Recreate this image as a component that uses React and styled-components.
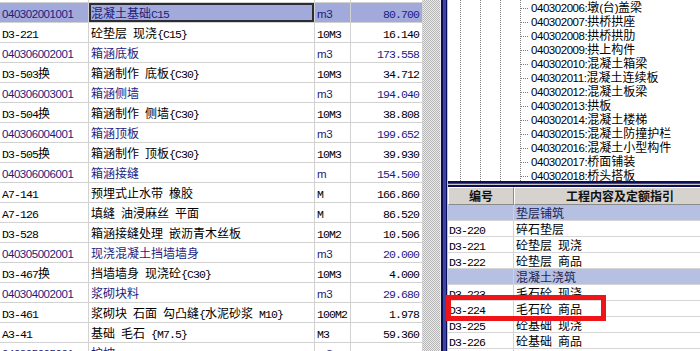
import React from "react";
import styled, { createGlobalStyle } from "styled-components";

const GlobalStyle = createGlobalStyle`
  html, body {
    margin: 0;
    padding: 0;
    background: #fff;
    overflow: hidden;
  }
  body {
    font-family: "Noto Sans CJK SC", sans-serif;
    font-size: 12px;
    color: #000;
  }
`;

const NAVY = "#1c1c80";

const Screen = styled.div`
  position: relative;
  display: flex;
  width: 700px;
  height: 351px;
  overflow: hidden;
`;

/* ---------- left bill grid ---------- */
const LeftGrid = styled.div`
  flex: none;
  width: 423px;
  height: 351px;
  overflow: hidden;
`;

const GridBody = styled.div`
  margin-top: -17px;
`;

const Row = styled.div`
  display: grid;
  grid-template-columns: 89px 226px 36px 72px;
  height: 20px;
  box-sizing: border-box;
  border-bottom: 1px solid #d2d2d2;
  background: ${(p) => (p.$sel ? "#a2aadb" : "#fff")};
  color: ${(p) => (p.$bill ? NAVY : "#000")};
`;

const Cell = styled.div`
  box-sizing: border-box;
  border-right: 1px solid #d2d2d2;
  padding: 0 ${(p) => (p.$right ? "3px" : "2px")};
  line-height: 20px;
  white-space: nowrap;
  overflow: hidden;
  text-align: ${(p) => (p.$right ? "right" : "left")};
  box-shadow: ${(p) => (p.$focus ? "inset 0 0 0 2px #2c2c34" : "none")};
`;

const Lat = styled.span`
  font-family: ${(p) =>
    p.$kind === "sans"
      ? '"Liberation Sans", Arial, sans-serif'
      : '"Liberation Mono", "DejaVu Sans Mono", monospace'};
  font-size: 11.5px;
  letter-spacing: ${(p) => (p.$kind === "sans" ? "-0.45px" : "-0.9px")};
  white-space: pre;
  line-height: inherit;
`;

const Han = styled.span`
  font-family: "Noto Sans CJK SC", sans-serif;
  font-size: 12px;
  line-height: inherit;
`;

function Mixed({ text, kind = "mono" }) {
  return text
    .split(/([\x20-\x7e]+)/)
    .filter(Boolean)
    .map((part, i) =>
      /^[\x20-\x7e]+$/.test(part) ? (
        <Lat key={i} $kind={kind}>
          {part}
        </Lat>
      ) : (
        <Han key={i}>{part}</Han>
      )
    );
}

/* ---------- hatch + splitter ---------- */
const Hatch = styled.div`
  flex: none;
  width: 17px;
  background: repeating-conic-gradient(#b4b4b4 0 25%, #ececec 0 50%) 0 0 / 2px 2px;
`;

const Splitter = styled.div`
  flex: none;
  width: 8px;
  background: linear-gradient(
    to right,
    #e6e6e6 0 1px,
    #0e0e58 1px 3px,
    #3a46a4 3px 6px,
    #0e0e58 6px 7px,
    #c4c4c4 7px 8px
  );
`;

/* ---------- right side ---------- */
const RightPane = styled.div`
  flex: 1;
  min-width: 0;
  display: flex;
  flex-direction: column;
  overflow: hidden;
`;

const Tree = styled.div`
  flex: none;
  height: 181px;
  overflow: hidden;
  background: #fff;
`;

const TreeRow = styled.div`
  height: 14px;
  line-height: 14px;
  padding-left: 73px;
  white-space: nowrap;
  background-image: linear-gradient(#7c7c7c 50%, transparent 50%),
    linear-gradient(#7c7c7c 50%, transparent 50%),
    linear-gradient(#7c7c7c 50%, transparent 50%),
    linear-gradient(#7c7c7c 50%, transparent 50%);
  background-size: 1px 2px;
  background-position: 12px 0, 32px 0, 52px 0, 72px 0;
  background-repeat: repeat-y;
`;

const Branch = styled.span`
  display: inline-block;
  width: 8px;
  height: 1px;
  margin-right: 2px;
  vertical-align: middle;
  background: linear-gradient(to right, #7c7c7c 50%, transparent 50%) 0 0 / 2px 1px repeat-x;
`;

const HBar = styled.div`
  flex: none;
  height: 6px;
  background: linear-gradient(
    to bottom,
    #0e0e58 0 2px,
    #3a46a4 2px 3px,
    #c8c8c8 3px 4px,
    #0e0e58 4px 6px
  );
`;

const Lower = styled.div`
  flex: 1;
  overflow: hidden;
`;

const Head = styled.div`
  display: grid;
  grid-template-columns: 66px 212px;
  height: 18px;
`;

const HeadCell = styled.div`
  box-sizing: border-box;
  background: #d6d3ce;
  border-top: 1px solid #fff;
  border-left: 1px solid #fff;
  border-right: 1px solid #8a8a8a;
  border-bottom: 1px solid #8a8a8a;
  text-align: center;
  font-weight: bold;
  line-height: 15px;
  color: #111;
`;

const LRow = styled.div`
  display: grid;
  grid-template-columns: 66px 212px;
  height: 16px;
  box-sizing: border-box;
  border-bottom: 1px solid #d6d6d6;
  background: ${(p) => (p.$group ? "#b6c0e2" : "#fff")};
  color: ${(p) => (p.$group ? "#1e1e50" : "#000")};
`;

const LCell = styled.div`
  box-sizing: border-box;
  border-right: 1px solid #d2d2d2;
  padding-left: ${(p) => (p.$first ? "1px" : "2px")};
  line-height: 15px;
  white-space: nowrap;
  overflow: hidden;
`;

const Mark = styled.div`
  position: absolute;
  left: 446px;
  top: 295px;
  width: 160px;
  height: 26px;
  box-sizing: border-box;
  border: 5px solid #ee1418;
  pointer-events: none;
`;

const rows = [
  ["D3-220", "碎石垫层", "10M3", "12.300"],
  ["040302001001", "混凝土基础C15", "m3", "80.700"],
  ["D3-221", "砼垫层 现浇{C15}", "10M3", "16.140"],
  ["040306002001", "箱涵底板", "m3", "173.558"],
  ["D3-503换", "箱涵制作 底板{C30}", "10M3", "34.712"],
  ["040306003001", "箱涵侧墙", "m3", "194.040"],
  ["D3-504换", "箱涵制作 侧墙{C30}", "10M3", "38.808"],
  ["040306004001", "箱涵顶板", "m3", "199.652"],
  ["D3-505换", "箱涵制作 顶板{C30}", "10M3", "39.930"],
  ["040306006001", "箱涵接缝", "m", "154.500"],
  ["A7-141", "预埋式止水带 橡胶", "M", "166.860"],
  ["A7-126", "填缝 油浸麻丝 平面", "M", "86.520"],
  ["D3-528", "箱涵接缝处理 嵌沥青木丝板", "10M2", "10.506"],
  ["040305002001", "现浇混凝土挡墙墙身", "m3", "20.000"],
  ["D3-467换", "挡墙墙身 现浇砼{C30}", "10M3", "4.000"],
  ["040304002001", "浆砌块料", "m3", "29.680"],
  ["D3-461", "浆砌块 石面 勾凸缝{水泥砂浆 M10}", "100M2", "1.978"],
  ["A3-41", "基础 毛石 {M7.5}", "M3", "59.360"],
  ["040305005001", "护坡", "m3", "89.500"],
];

const treeItems = [
  "040302006:墩(台)盖梁",
  "040302007:拱桥拱座",
  "040302008:拱桥拱肋",
  "040302009:拱上构件",
  "040302010:混凝土箱梁",
  "040302011:混凝土连续板",
  "040302012:混凝土板梁",
  "040302013:拱板",
  "040302014:混凝土楼梯",
  "040302015:混凝土防撞护栏",
  "040302016:混凝土小型构件",
  "040302017:桥面铺装",
  "040302018:桥头搭板",
];

const quotas = [
  { group: "垫层铺筑" },
  { code: "D3-220", name: "碎石垫层" },
  { code: "D3-221", name: "砼垫层 现浇" },
  { code: "D3-222", name: "砼垫层 商品" },
  { group: "混凝土浇筑" },
  { code: "D3-223", name: "毛石砼 现浇" },
  { code: "D3-224", name: "毛石砼 商品" },
  { code: "D3-225", name: "砼基础 现浇" },
  { code: "D3-226", name: "砼基础 商品" },
  { code: "D3-227", name: "砼承台 现浇" },
];

export default function App() {
  return (
    <>
      <GlobalStyle />
      <Screen>
        <LeftGrid>
          <GridBody>
            {rows.map(([code, name, unit, qty], i) => {
              const bill = /^\d{12}$/.test(code);
              const sel = i === 1;
              return (
                <Row key={i} $bill={bill} $sel={sel}>
                  <Cell>
                    <Mixed text={code} kind={bill ? "sans" : "mono"} />
                  </Cell>
                  <Cell $focus={sel}>
                    <Mixed text={name} />
                  </Cell>
                  <Cell>
                    <Mixed text={unit} kind={bill ? "sans" : "mono"} />
                  </Cell>
                  <Cell $right>
                    <Mixed text={qty} />
                  </Cell>
                </Row>
              );
            })}
          </GridBody>
        </LeftGrid>
        <Hatch />
        <Splitter />
        <RightPane>
          <Tree>
            {treeItems.map((t) => (
              <TreeRow key={t}>
                <Branch />
                <Mixed text={t} kind="sans" />
              </TreeRow>
            ))}
          </Tree>
          <HBar />
          <Lower>
            <Head>
              <HeadCell>编号</HeadCell>
              <HeadCell>工程内容及定额指引</HeadCell>
            </Head>
            {quotas.map((q, i) => (
              <LRow key={i} $group={!!q.group}>
                <LCell $first>{q.code && <Mixed text={q.code} />}</LCell>
                <LCell>
                  <Mixed text={q.group || q.name} />
                </LCell>
              </LRow>
            ))}
          </Lower>
        </RightPane>
        <Mark />
      </Screen>
    </>
  );
}
